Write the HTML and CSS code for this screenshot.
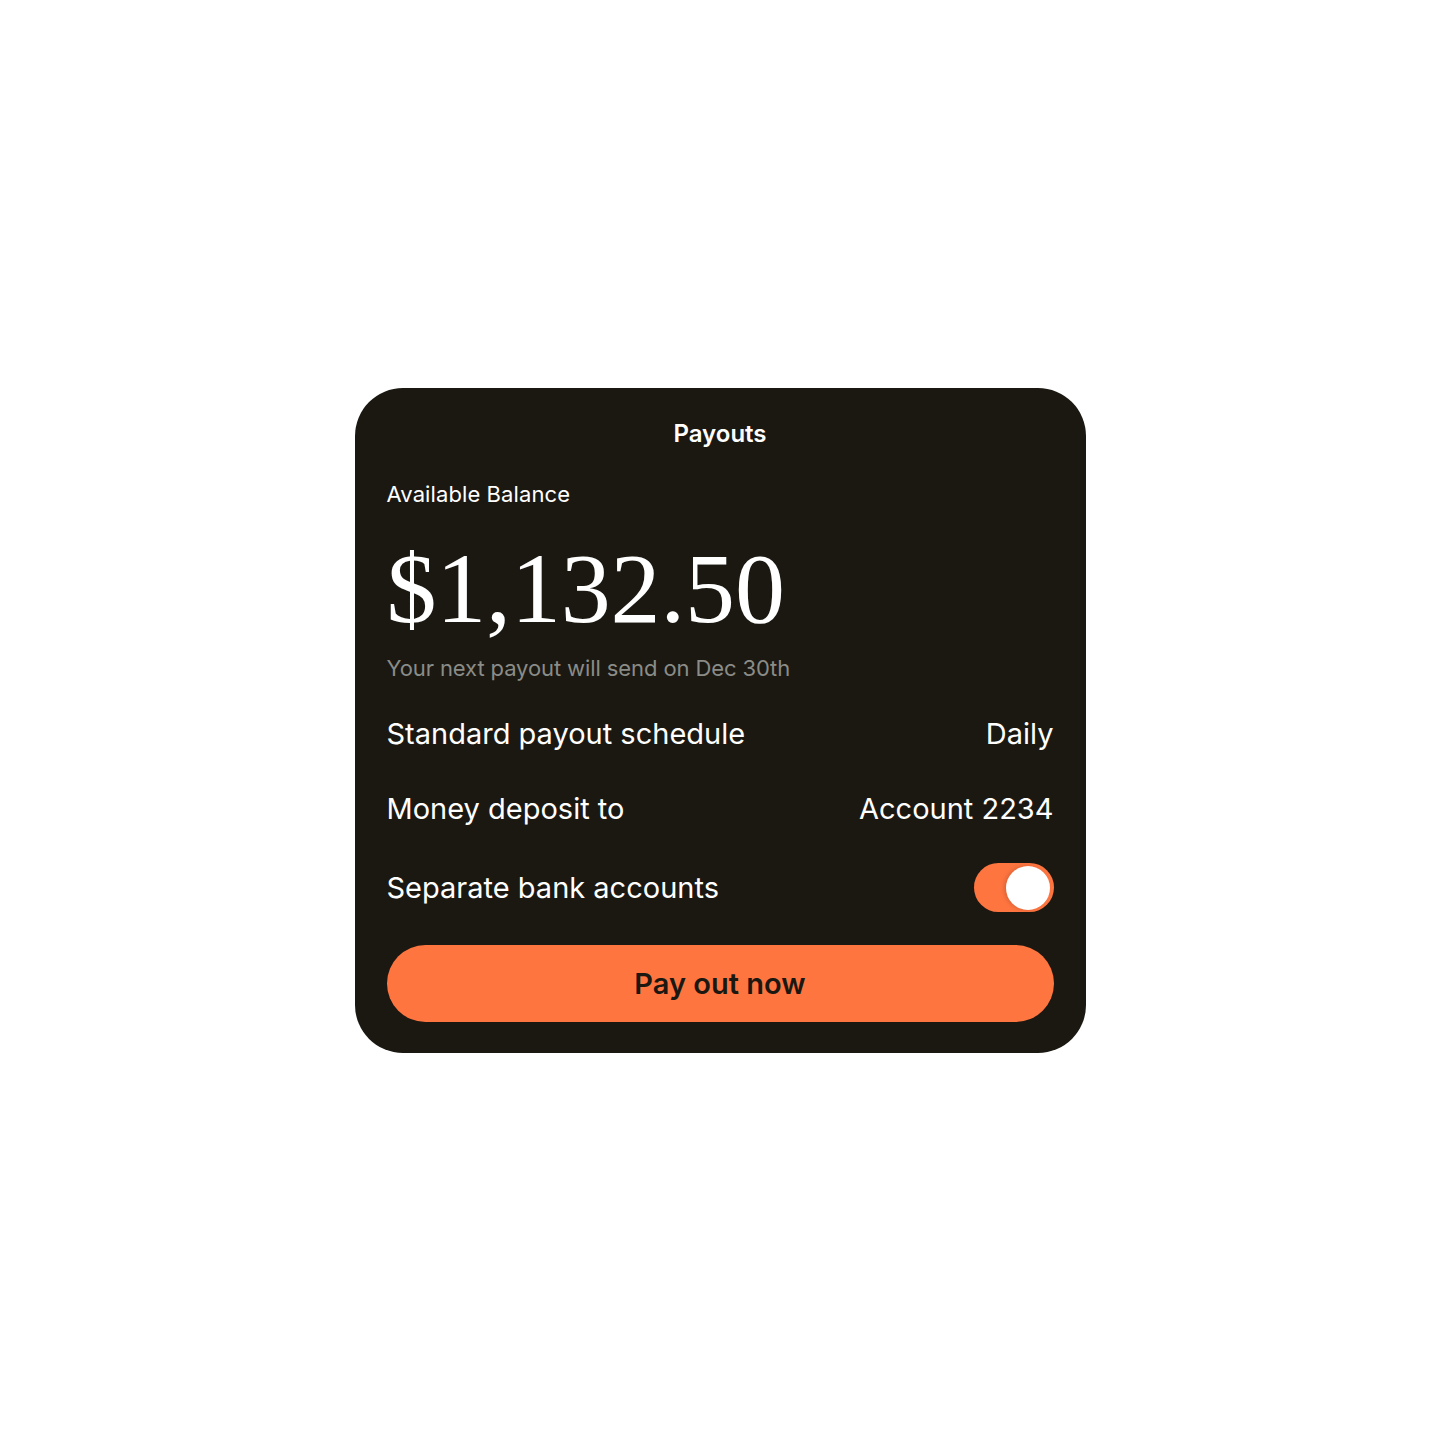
FILE: index.html
```html
<!DOCTYPE html>
<html lang="en">
<head>
  <meta charset="UTF-8">
  <meta name="viewport" content="width=device-width, initial-scale=1.0">
  <title>Payouts</title>
  <link rel="stylesheet" href="styles.css">
</head>
<body>
  <div class="page">
    <div class="card">
      <h1 class="card-title">Payouts</h1>

      <div class="balance">
        <div class="balance-label">Available Balance</div>
        <div class="balance-amount">$1,132.50</div>
        <div class="balance-note">Your next payout will send on Dec 30th</div>
      </div>

      <div class="rows">
        <div class="row">
          <span>Standard payout schedule</span>
          <span>Daily</span>
        </div>
        <div class="row">
          <span>Money deposit to</span>
          <span>Account 2234</span>
        </div>
        <div class="row row-toggle">
          <span>Separate bank accounts</span>
          <span class="toggle"><span class="toggle-knob"></span></span>
        </div>
      </div>

      <button class="pay-button">Pay out now</button>
    </div>
  </div>
</body>
</html>
```

FILE: styles.css
```css
body {
  margin: 0;
  background-color: #ffffff;
  font-family: Inter, 'Liberation Sans', sans-serif;
}

.page {
  display: flex;
  justify-content: center;
  align-items: center;
  min-height: 1440px;
}

.card {
  width: 731px;
  box-sizing: border-box;
  padding: 31px 32px 31px;
  background-color: #1b1812;
  border-radius: 48px;
  color: #ffffff;
  display: flex;
  flex-direction: column;
}

.card-title {
  margin: 0;
  font-size: 24px;
  font-weight: 600;
  line-height: 30px;
  text-align: center;
}

.balance {
  margin-top: 30px;
}

.balance-label {
  font-size: 22px;
  line-height: 30px;
  letter-spacing: 0.1px;
}

.balance-amount {
  margin-top: 30px;
  font-family: 'Liberation Serif', 'Times New Roman', serif;
  font-size: 100px;
  line-height: 100px;
  letter-spacing: -0.2px;
}

.balance-note {
  margin-top: 14px;
  font-size: 22px;
  line-height: 30px;
  color: #8a8c87;
  letter-spacing: -0.1px;
}

.rows {
  margin-top: 26px;
  display: flex;
  flex-direction: column;
}

.row {
  display: flex;
  justify-content: space-between;
  align-items: center;
  font-size: 29px;
  height: 50px;
}

.row + .row {
  margin-top: 25px;
}

.row-toggle {
  margin-top: 29px !important;
}

.toggle {
  width: 80px;
  height: 49px;
  border-radius: 25px;
  background-color: #ff7540;
  display: flex;
  align-items: center;
  justify-content: flex-end;
  padding: 0 4px;
  box-sizing: border-box;
}

.toggle-knob {
  width: 44px;
  height: 44px;
  border-radius: 50%;
  background-color: #ffffff;
  box-shadow: -2px 0 4px rgba(0, 0, 0, 0.15);
}

.pay-button {
  margin-top: 32px;
  height: 77px;
  border: none;
  border-radius: 40px;
  background-color: #ff7540;
  color: #1b1812;
  font-family: Inter, 'Liberation Sans', sans-serif;
  font-size: 29px;
  font-weight: 600;
  cursor: pointer;
}
```
